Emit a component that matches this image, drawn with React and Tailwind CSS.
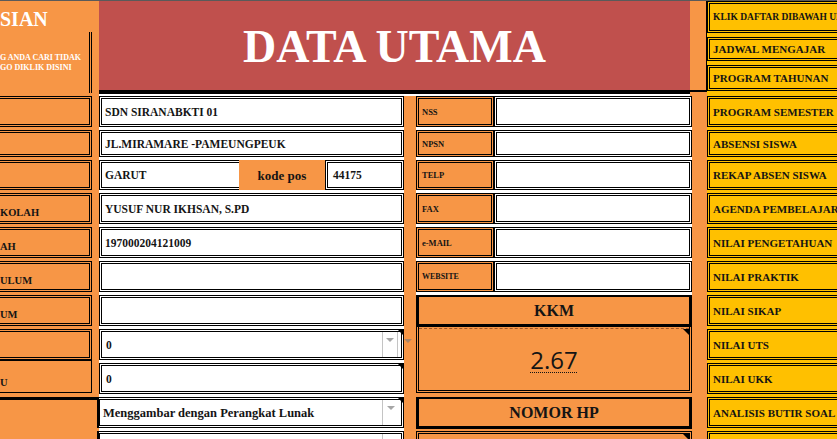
import React from "react";

const ROWH = ["h-[34px]", "h-[30px]", "h-[33px]", "h-[34px]", "h-[34px]", "h-[34px]", "h-[34px]", "h-[34px]", "h-[34px]", "h-[34px]", "h-[34px]"];

function Corner() {
  return (
    <span className="absolute right-[-3px] top-[-3px] w-0 h-0 border-t-[7px] border-t-black border-l-[7px] border-l-transparent" />
  );
}

function Drop({ two = true }) {
  return (
    <div
      className={`absolute top-0 bottom-0 right-[3px] w-[16px] border-l border-[#c4c4c4] ${two ? "border-r" : ""} flex justify-center pt-[6px]`}
    >
      <span className="w-0 h-0 border-x-[4px] border-x-transparent border-t-[4px] border-t-[#a6a6a6]" />
    </div>
  );
}

function Cell({ children, className = "" }) {
  return (
    <div className={`relative flex-1 flex items-center border-[3px] border-double border-black pt-[2px] ${className}`}>
      {children}
    </div>
  );
}

function MidCol() {
  return (
    <div className="w-[305px] shrink-0 bg-white flex flex-col text-[11.5px]">
      <div className={`${ROWH[0]} shrink-0 pb-[3px] flex`}>
        <Cell className="px-[3px]">SDN SIRANABKTI 01</Cell>
      </div>
      <div className={`${ROWH[1]} shrink-0 pb-[3px] flex`}>
        <Cell className="px-[3px]">JL.MIRAMARE -PAMEUNGPEUK</Cell>
      </div>
      <div className={`${ROWH[2]} shrink-0 pb-[3px] flex`}>
        <div className="w-[140px] flex items-center border-[3px] border-r-0 border-double border-black px-[3px] pt-[2px]">GARUT</div>
        <div className="w-[86px] bg-[#F79646] flex items-center justify-center text-[13px] pt-[2px]">kode pos</div>
        <Cell className="pl-[5px]">44175</Cell>
      </div>
      <div className={`${ROWH[3]} shrink-0 pb-[3px] flex`}>
        <Cell className="px-[3px]">YUSUF NUR IKHSAN, S.PD</Cell>
      </div>
      <div className={`${ROWH[4]} shrink-0 pb-[3px] flex`}>
        <Cell className="px-[3px]">197000204121009</Cell>
      </div>
      <div className={`${ROWH[5]} shrink-0 pb-[3px] flex`}>
        <Cell />
      </div>
      <div className={`${ROWH[6]} shrink-0 pb-[3px] flex`}>
        <Cell />
      </div>
      <div className={`${ROWH[7]} shrink-0 pb-[3px] flex`}>
        <Cell className="px-[4px]">
          0
          <Drop />
          <Corner />
        </Cell>
      </div>
      <div className={`${ROWH[8]} shrink-0 pb-[3px] flex`}>
        <Cell className="px-[4px]">
          0
          <Corner />
        </Cell>
      </div>
      <div className={`${ROWH[9]} shrink-0 pb-[3px] flex`}>
        <Cell className="-ml-[2px] px-[3px] text-[12.5px] [border-left-style:solid]">
          Menggambar dengan Perangkat Lunak
          <Drop two={false} />
          <Corner />
        </Cell>
      </div>
      <div className={`${ROWH[10]} shrink-0 pb-[3px] flex`}>
        <Cell className="-ml-[2px] [border-left-style:solid]">
          <Drop two={false} />
        </Cell>
      </div>
    </div>
  );
}

function GapCol() {
  return (
    <div className="w-[12px] shrink-0 flex flex-col">
      <div className="h-[243px] shrink-0" />
      <span className="w-0 h-0 border-x-[4px] border-x-transparent border-t-[4px] border-t-[#a98466]" />
    </div>
  );
}

function LabelRow({ h, label, small = false }) {
  return (
    <div className={`${h} shrink-0 pb-[3px] flex`}>
      <div
        className={`w-[78px] bg-[#F79646] flex items-center border-[3px] border-double border-black pl-[3px] pt-[1px] ${small ? "text-[8px]" : "text-[8.5px]"}`}
      >
        {label}
      </div>
      <div className="flex-1 bg-white border-[3px] border-double border-black" />
    </div>
  );
}

function RightMid() {
  return (
    <div className="w-[276px] shrink-0 flex flex-col">
      <div className="bg-white flex flex-col shrink-0">
        <LabelRow h={ROWH[0]} label="NSS" />
        <LabelRow h={ROWH[1]} label="NPSN" />
        <LabelRow h={ROWH[2]} label="TELP" />
        <LabelRow h={ROWH[3]} label="FAX" />
        <LabelRow h={ROWH[4]} label="e-MAIL" />
        <LabelRow h={ROWH[5]} label="WEBSITE" small />
      </div>
      <div className="h-[32px] shrink-0 border-t-2 border-x-[3px] border-b-[3px] border-black flex items-center justify-center text-[16px] pt-[1px]">
        KKM
      </div>
      <div className="relative h-[66px] shrink-0 border-x-[3px] border-b-[3px] border-double border-black">
        <div className="h-full border-t border-dashed border-[#a0582a] flex items-center justify-center mt-[1px]">
          <span className="font-['Open_Sans',sans-serif] font-normal text-[24px] leading-none underline decoration-dotted decoration-1 underline-offset-[3px]">
            2.67
          </span>
        </div>
        <span className="absolute right-0 top-[2px] w-0 h-0 border-t-[6px] border-t-black border-l-[6px] border-l-transparent" />
      </div>
      <div className="h-[4px] shrink-0" />
      <div className="h-[32px] shrink-0 border-t-2 border-x-[3px] border-b-[3px] border-black flex items-center justify-center text-[16px] pt-[1px]">
        NOMOR HP
      </div>
      <div className="h-[2px] shrink-0" />
      <div className="relative h-[40px] shrink-0 border-x-[3px] border-t-[3px] border-double border-black">
        <span className="absolute right-0 top-0 w-0 h-0 border-t-[6px] border-t-black border-l-[6px] border-l-transparent" />
      </div>
    </div>
  );
}

function Center() {
  return (
    <div className="w-[608px] shrink-0 flex flex-col">
      <div className="h-[95px] shrink-0 flex">
        <div className="w-[591px] flex flex-col bg-white">
          <div className="h-[89px] shrink-0 bg-[#C0504D] flex items-center justify-center text-white text-[46px] leading-none pt-[3px]">
            DATA UTAMA
          </div>
          <div className="h-[4px] shrink-0 bg-black" />
        </div>
        <div className="flex-1 h-[91px] border-r border-b-2 border-black" />
      </div>
      <div className="flex shrink-0">
        <MidCol />
        <GapCol />
        <RightMid />
      </div>
    </div>
  );
}

function LeftCell({ h, text = "" }) {
  return (
    <div className={`${h} shrink-0 pb-[3px] flex`}>
      <div className="w-[92px] flex items-end border-[3px] border-l-0 border-double border-black pb-[2px] text-[10.5px] leading-[13px] whitespace-nowrap">
        <span>{text}</span>
      </div>
    </div>
  );
}

function LeftCol() {
  return (
    <div className="w-[99px] shrink-0 flex flex-col">
      <div className="h-[95px] shrink-0 flex flex-col">
        <div className="h-[31px] shrink-0 pt-[8px] text-white text-[20px] leading-[20px] whitespace-nowrap">SIAN</div>
        <div className="w-[92px] h-[61px] shrink-0 border-r-[3px] border-double border-black pt-[21px] text-white text-[8px] leading-[10px] whitespace-nowrap">
          <div>G ANDA CARI TIDAK</div>
          <div>GO DIKLIK DISINI</div>
        </div>
      </div>
      <LeftCell h={ROWH[0]} />
      <LeftCell h={ROWH[1]} />
      <LeftCell h={ROWH[2]} />
      <LeftCell h={ROWH[3]} text="KOLAH" />
      <LeftCell h={ROWH[4]} text="AH" />
      <LeftCell h={ROWH[5]} text="ULUM" />
      <LeftCell h={ROWH[6]} text="UM" />
      <div className="h-[31px] shrink-0 flex">
        <div className="w-[92px] border-[3px] border-l-0 border-double border-black" />
      </div>
      <div className="h-[37px] shrink-0 pb-[4px] flex">
        <div className="w-[92px] flex items-end border border-l-0 border-black pb-[3px] text-[10.5px] leading-[13px]">
          U
        </div>
      </div>
      <div className="w-[97px] h-[3px] shrink-0 bg-black" />
    </div>
  );
}

function Yel({ h, children, className = "" }) {
  return (
    <div className={`${h} shrink-0 flex`}>
      <div
        className={`flex-1 flex items-center border-[3px] border-double border-black pl-[3px] pt-[1px] whitespace-nowrap overflow-hidden ${className}`}
      >
        {children}
      </div>
    </div>
  );
}

function RightCol() {
  const items = [
    "PROGRAM SEMESTER",
    "ABSENSI SISWA",
    "REKAP ABSEN SISWA",
    "AGENDA PEMBELAJARAN",
    "NILAI PENGETAHUAN",
    "NILAI PRAKTIK",
    "NILAI SIKAP",
    "NILAI UTS",
    "NILAI UKK",
    "ANALISIS BUTIR SOAL",
    "",
  ];
  return (
    <div className="w-[150px] shrink-0 bg-[#FFC000] flex flex-col text-[11px]">
      <div className="h-[95px] shrink-0 flex flex-col">
        <Yel h="h-[36px] pb-[4px]" className="text-[9.5px]">
          KLIK DAFTAR DIBAWAH UNTUK MEMBUKA
        </Yel>
        <Yel h="h-[28px] pb-[4px]">JADWAL MENGAJAR</Yel>
        <Yel h="h-[31px] pb-[5px]">PROGRAM TAHUNAN</Yel>
      </div>
      {items.map((t, i) => (
        <Yel key={i} h={`${ROWH[i]} pb-[3px]`}>
          {t}
        </Yel>
      ))}
    </div>
  );
}

export default function App() {
  return (
    <div className="w-[837px] h-[439px] overflow-hidden bg-[#F79646] border-t border-[#5a5a5a] flex font-['Liberation_Serif',serif] font-bold text-[#141414]">
      <LeftCol />
      <Center />
      <RightCol />
    </div>
  );
}
